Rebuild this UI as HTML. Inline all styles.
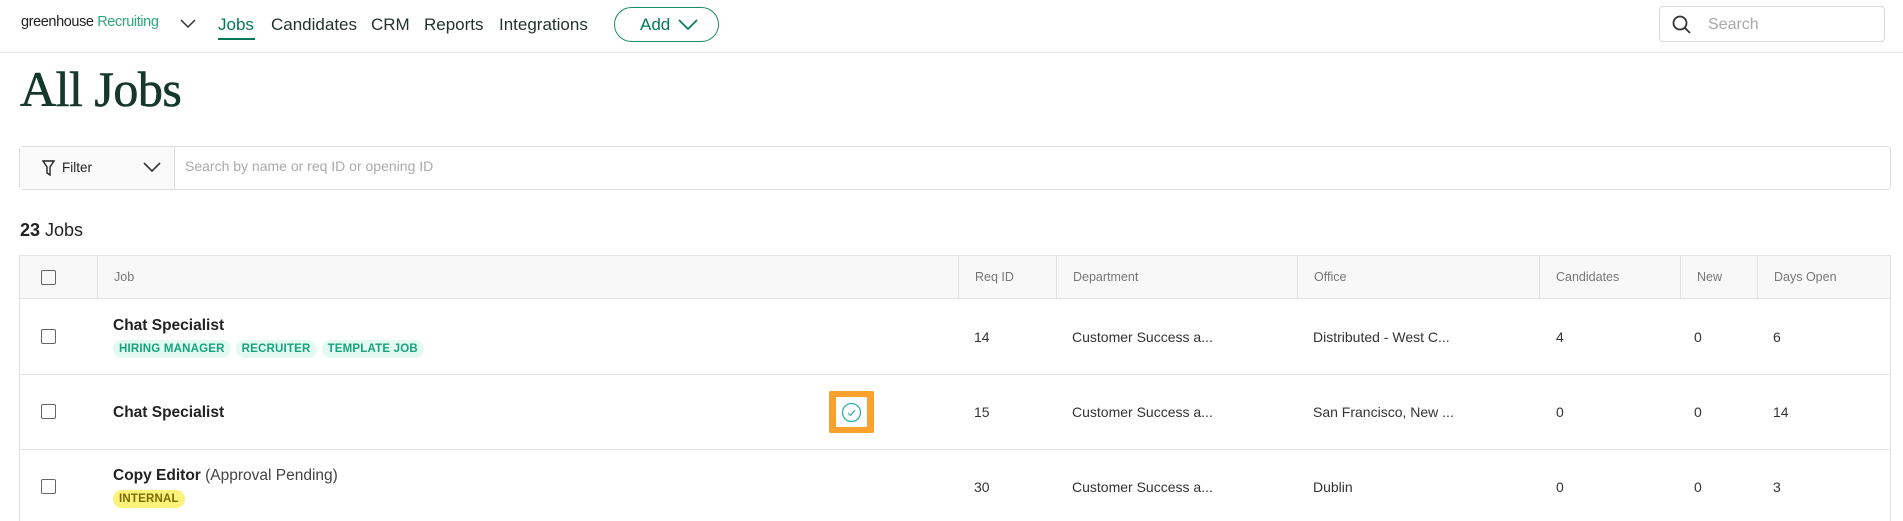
<!DOCTYPE html>
<html><head><meta charset="utf-8"><style>
*{box-sizing:border-box;margin:0;padding:0}
body{width:1903px;height:521px;overflow:hidden;background:#fff;font-family:"Liberation Sans",sans-serif;color:#222;position:relative}
.a{position:absolute}
.nav{font-size:17px;color:#24332d;top:15px}
.th{position:absolute;top:255px;height:44px;border-left:1px solid #e2e2e2;font-size:12.5px;color:#777;padding:16px 0 0 16px;line-height:13px}
.cell{position:absolute;font-size:14px;color:#333}
.cb{position:absolute;left:41px;width:15px;height:15px;border:1.8px solid #666;border-radius:2px}
.tag{display:inline-block;font-size:11.5px;font-weight:bold;padding:3px 6px;border-radius:9px;margin-right:5px;letter-spacing:.2px}
.g{background:#e3faf2;color:#16a37b}
.y{background:#fbf27a;color:#7d6b00}
.title{position:absolute;left:113px;font-size:15.5px;font-weight:bold;color:#222}
</style></head><body>
<div class="a" style="left:0;top:52px;width:1903px;height:1px;background:#e6e6e6"></div>
<div class="a" style="left:21px;top:14px;font-size:14.5px;color:#222;letter-spacing:-.4px">greenhouse <span style="color:#2fa57a">Recruiting</span></div>
<svg class="a" style="left:180px;top:19px" width="16" height="10"><path d="M1 1l7 7 7-7" fill="none" stroke="#333" stroke-width="1.5"/></svg>
<div class="a nav" style="left:218px;color:#047957">Jobs</div>
<div class="a" style="left:218px;top:38px;width:37px;height:2px;background:#047957"></div>
<div class="a nav" style="left:271px">Candidates</div>
<div class="a nav" style="left:371px">CRM</div>
<div class="a nav" style="left:424px">Reports</div>
<div class="a nav" style="left:499px">Integrations</div>
<div class="a" style="left:614px;top:7px;width:105px;height:35px;border:1.5px solid #1d8d69;border-radius:18px;color:#047957;font-size:17px;padding:7px 0 0 25px">Add<svg style="position:absolute;left:63px;top:11px" width="20" height="11"><path d="M1 1l9 9 9-9" fill="none" stroke="#047957" stroke-width="1.6"/></svg></div>
<div class="a" style="left:1659px;top:6px;width:226px;height:36px;border:1px solid #d8d8d8;border-radius:4px">
<svg style="position:absolute;left:12px;top:8px" width="20" height="20"><circle cx="8" cy="8" r="6.5" fill="none" stroke="#333" stroke-width="1.8"/><path d="M13 13l5 5" stroke="#333" stroke-width="1.8"/></svg>
<span style="position:absolute;left:48px;top:9px;font-size:16px;color:#aaa">Search</span></div>
<div class="a" style="left:20px;top:60px;font-family:'Liberation Serif',serif;font-size:50px;color:#15372c;letter-spacing:-.5px;-webkit-text-stroke:.6px #15372c">All Jobs</div>
<div class="a" style="left:19px;top:146px;width:1872px;height:44px;border:1px solid #dedede;border-radius:4px"></div>
<div class="a" style="left:20px;top:147px;width:155px;height:42px;background:#fafafa;border-right:1px solid #dedede"></div>
<svg class="a" style="left:42px;top:160px" width="13" height="16"><path d="M1 1h11l-4 6v8l-3-2V7z" fill="none" stroke="#222" stroke-width="1.4"/></svg>
<div class="a" style="left:62px;top:160px;font-size:13.5px;color:#222">Filter</div>
<svg class="a" style="left:143px;top:162px" width="18" height="11"><path d="M1 1l8 8 8-8" fill="none" stroke="#333" stroke-width="1.6"/></svg>
<div class="a" style="left:185px;top:158px;font-size:14px;color:#aaa">Search by name or req ID or opening ID</div>
<div class="a" style="left:20px;top:220px;font-size:18px;color:#222"><b>23</b> Jobs</div>
<div class="a" style="left:19px;top:255px;width:1872px;height:44px;background:#f8f8f8;border:1px solid #e2e2e2"></div>
<div class="a" style="left:19px;top:255px;width:1px;height:266px;background:#e2e2e2"></div>
<div class="a" style="left:1890px;top:255px;width:1px;height:266px;background:#e2e2e2"></div>
<div class="cb" style="top:270px"></div>
<div class="th" style="left:97px;width:861px">Job</div>
<div class="th" style="left:958px;width:98px">Req ID</div>
<div class="th" style="left:1056px;width:241px">Department</div>
<div class="th" style="left:1297px;width:242px">Office</div>
<div class="th" style="left:1539px;width:141px">Candidates</div>
<div class="th" style="left:1680px;width:77px">New</div>
<div class="th" style="left:1757px;width:134px">Days Open</div>
<div class="a" style="left:19px;top:374px;width:1872px;height:1px;background:#e2e2e2"></div>
<div class="a" style="left:19px;top:449px;width:1872px;height:1px;background:#e2e2e2"></div>
<!-- row1 -->
<div class="cb" style="top:329px"></div>
<div class="title" style="top:317px">Chat Specialist</div>
<div class="a" style="left:113px;top:339px"><span class="tag g">HIRING MANAGER</span><span class="tag g">RECRUITER</span><span class="tag g">TEMPLATE JOB</span></div>
<div class="cell" style="left:974px;top:329px">14</div>
<div class="cell" style="left:1072px;top:329px">Customer Success a...</div>
<div class="cell" style="left:1313px;top:329px">Distributed - West C...</div>
<div class="cell" style="left:1556px;top:329px">4</div>
<div class="cell" style="left:1694px;top:329px">0</div>
<div class="cell" style="left:1773px;top:329px">6</div>
<!-- row2 -->
<div class="cb" style="top:404px"></div>
<div class="title" style="top:404px">Chat Specialist</div>
<div class="a" style="left:829px;top:391px;width:45px;height:42px;background:#f9a12d;border-radius:2px"></div>
<div class="a" style="left:836px;top:397px;width:31px;height:30px;background:#fff"></div>
<svg class="a" style="left:841px;top:402px" width="21" height="21"><circle cx="10.5" cy="10.5" r="9" fill="none" stroke="#2db3a8" stroke-width="1.3"/><path d="M7 11l2.5 2.5L14 8" fill="none" stroke="#2db3a8" stroke-width="1.2"/></svg>
<div class="cell" style="left:974px;top:404px">15</div>
<div class="cell" style="left:1072px;top:404px">Customer Success a...</div>
<div class="cell" style="left:1313px;top:404px">San Francisco, New ...</div>
<div class="cell" style="left:1556px;top:404px">0</div>
<div class="cell" style="left:1694px;top:404px">0</div>
<div class="cell" style="left:1773px;top:404px">14</div>
<!-- row3 -->
<div class="cb" style="top:479px"></div>
<div class="title" style="top:467px">Copy Editor <span style="font-weight:normal;color:#444">(Approval Pending)</span></div>
<div class="a" style="left:113px;top:489px"><span class="tag y">INTERNAL</span></div>
<div class="cell" style="left:974px;top:479px">30</div>
<div class="cell" style="left:1072px;top:479px">Customer Success a...</div>
<div class="cell" style="left:1313px;top:479px">Dublin</div>
<div class="cell" style="left:1556px;top:479px">0</div>
<div class="cell" style="left:1694px;top:479px">0</div>
<div class="cell" style="left:1773px;top:479px">3</div>
</body></html>
